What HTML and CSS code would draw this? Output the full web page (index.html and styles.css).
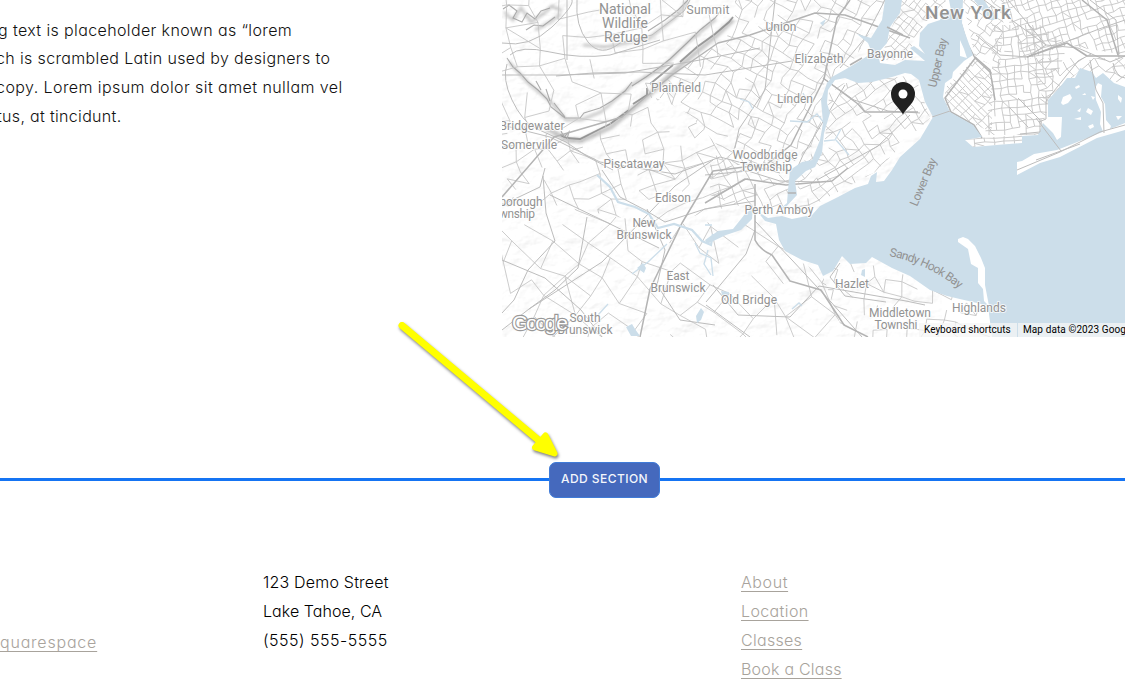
FILE: index.html
```html
<!DOCTYPE html>
<html lang="en">
<head>
<meta charset="utf-8">
<title>Location</title>
<link rel="stylesheet" href="styles.css">
</head>
<body>
<main class="page">
  <section class="intro">
    <div class="copy">
      <div class="l1">g text is placeholder known as “lorem</div>
      <div class="l2">ch is scrambled Latin used by designers to</div>
      <div class="l3">copy. Lorem ipsum dolor sit amet nullam vel</div>
      <div class="l4">tus, at tincidunt.</div>
    </div>
    <div class="map">
      <svg class="map-art" viewBox="502 0 623 337" width="623" height="337">
        <defs>
          <filter id="soft" x="-20%" y="-20%" width="140%" height="140%"><feGaussianBlur stdDeviation="1.5"/></filter>
          <filter id="relief" x="0" y="0" width="100%" height="100%">
            <feTurbulence type="fractalNoise" baseFrequency=".045 .07" numOctaves="4" seed="8"/>
            <feDiffuseLighting surfaceScale="3" lighting-color="#fff" diffuseConstant="1.45"><feDistantLight azimuth="225" elevation="45"/></feDiffuseLighting>
          </filter>
        </defs>
        <rect x="502" y="0" width="623" height="337" fill="#fff"/>
        <rect x="502" y="0" width="440" height="337" filter="url(#relief)" opacity=".17"/>
        <g class="shade" filter="url(#soft)">
          <path d="M509 62L529 84L551 102L566 120L581 120L601 112L633 84L661 69L688 42L716 19"/>
          <path class="deep" d="M546 128L568 140L581 141L611 127L648 96L681 65L716 36L733 20"/>
          <path d="M583 45L605 47L648 39L675 18L688 1"/>
          <path d="M504 12L513 20L521 8L531 22L543 14L552 6L562 11M535 30L550 22L561 14"/>
        </g>
        <g class="ridge">
          <path d="M507 58L513 67L520 73L528 82L538 90L547 99L551 107L565 118L580 118L584 113L600 108L612 101L625 91L632 82"/>
          <path d="M632 86L646 77L660 67L670 59L687 43L700 30L715 18L721 10"/>
          <path class="heavy" d="M560 135L567 138L580 139L596 131L610 124L629 110M633 104L647 95L647 88M650 84L673 65M680 62L697 47L715 34L729 22L733 17"/>
          <path d="M648 31L665 20L678 10L688 0M546 89L550 101M536 81L541 90M554 103L565 117M561 131l3 6 5-5-2 7"/>
          <path d="M503 9l6-4 8 6-4 7 9 4 5-9 8 6 6-8 9-3M526 30l8-5 9 1 12-9"/>
        </g>
        <g id="streets"></g>
        <g class="road">
          <path d="M502 43Q530 48 552 27T572 0M577 0Q575 26 588 42T620 43L652 35L684 11L690 0"/>
          <path d="M507 64Q502 79 512 100T535 128L566 142L588 157L613 170M502 75H560L625 73L700 60L760 48"/>
          <path d="M510 55Q520 45 550 52T610 55L660 40M556 76L593 73L640 72L705 75L792 61"/>
          <path d="M502 125L550 137L600 162L675 174L720 157L780 173"/>
          <path d="M502 205L540 187L545 168M543 176L546 213L555 241L528 270L514 300L502 313M587 217L578 268L555 290L529 309L502 330"/>
          <path d="M502 260L545 278L581 310L602 337M550 195L602 220L659 248M529 309L602 262L675 186L713 160"/>
          <path d="M567 0V60M602 170L620 197L645 210L665 222L705 209L755 201M647 209L665 250L657 285L680 320L715 325"/>
          <path d="M706 305L750 337M706 302L746 254L755 230M713 285L738 315L790 317L819 286L906 301L925 305"/>
          <path d="M755 221L792 260L831 302L862 337M840 263L830 277L845 296L886 302"/>
          <path d="M885 0L865 38L840 68M920 113L888 111L854 100L823 78M910 115L878 146L817 180"/>
          <path d="M792 180L803 155L845 85M735 148L739 129L765 90L775 0M705 175L748 171L780 181L820 182"/>
        </g>
        <g class="highway">
          <path d="M640 337L650 289L682 223L713 171L767 164L791 145L824 79L837 18L850 0"/>
          <path d="M755 184V240Q760 250 772 255L790 281L821 290L844 325L868 337"/>
          <path d="M502 197L554 137L622 117L672 75L718 43L750 35L815 13L845 15L910 38"/>
          <path d="M705 203L745 179L786 185L832 181L848 168M823 78L858 104L865 112L918 112"/>
          <path d="M954 0L967 43L975 58L991 73M976 57L945 98L951 112L974 125L982 138"/>
        </g>
        <g class="water">
          <path d="M757 211L768 218L782 216L792 219L812 215L820 206L838 197L855 188L868 184L871 176L877 172L876 182L884 181L892 170L900 157L920 139L933 117L925 102L919 80L911 74L905 73L892 77L872 82L858 83L845 78L835 80L828 90L827 103L830 113L824 133L822 153L815 167L806 171L795 181L797 195L785 208L779 210L787 203L788 190L790 170L802 162L812 160L820 140L823 123L821 100L827 83L832 77L848 68L858 62L872 53L868 43L857 34L871 38L882 20L885 0H902L900 13L890 27L887 43L878 53L880 63L895 65L905 60L925 61L910 48L914 46L925 54L919 46L920 33L928 24L940 20L944 12L951 10L949 0H963L962 23L965 33L973 55L964 61L953 72L952 78L945 83L943 97L950 112L973 125L982 137L965 140L973 147L1022 143L1022 136L1038 135L1043 123L1053 133L1057 140L1061 137L1062 117L1048 117L1048 100L1060 87L1067 78L1075 78L1080 68L1092 72L1096 78L1103 73L1114 83L1125 87V337H992L988 306L977 303L947 296L930 290L910 276L892 268L872 257L866 263L850 264L842 256L833 271L823 276L818 265L802 260L785 251L779 240L776 224L765 221Z"/>
          <path d="M974 0H984L997 20L989 20ZM705 240L718 231L733 229L745 214L753 208L752 219L741 230L726 235L707 244Z"/>
          <path d="M626 327l6-3 3 5 5 7h-9zM637 268l6-5 3 5-2 5zM721 291l8 1-1 5-6-2zM696 316l5-8 3 4-3 8-4 3zM862 270l3-1v8l-4-2zM820 23l6-4-3 7z"/>
        </g>
        <g class="stream">
          <path class="wide" d="M597 175L610 187L618 202L635 207L649 214L658 228L674 224L692 230L702 241L711 245L713 234"/>
          <path d="M695 243L700 253L711 258L713 276M667 244L648 262L632 274M608 304L598 315M705 225L712 225M790 121L807 122L817 114L825 124M824 141L835 140L841 129M836 140L843 148L849 155M803 93L807 101M740 99L749 102L753 109M708 250L704 264L711 275M792 309L799 303L802 306"/>
        </g>
        <g class="islands">
          <path d="M1017 162L1022 161L1034 154L1057 150L1090 137L1125 123V130L1097 138L1060 157L1040 163L1017 175Z"/>
          <path d="M958 239L963 237L968 239L975 246L981 258L985 268L985 285L989 306L984 301L983 289L978 283L978 268L971 264L968 249L958 242Z"/>
          <path d="M1061 103L1063 97L1070 94L1072 98L1068 103L1063 105ZM1075 87l4-2 1 2-4 2zM1074 119l7-2v3zM1095 88L1098 83L1102 85L1101 97L1105 104L1106 120L1111 126L1108 134L1104 134L1100 124L1101 112L1096 100ZM1088 126l5-2 1 3-4 2zM1116 116l6 0-4 4zM1077 111l4-3-1 4zM1088 108l5 3-2 4-5-3zM1091 96l4 1-2 3zM1082 95l3-2 1 2zM960 40L964 49L967 58L960 56ZM1118 95l4 3-1 5-3-4z"/>
        </g>
        <g class="road bridge">
          <path d="M932 117L950 111M1036 118L1061 151M1090 60L1096 90L1103 103L1104 133M1017 170L1060 152L1100 132L1125 125M1036 160L1080 144"/>
          <path d="M984 0L1046 45L1078 48L1110 62L1125 56M1008 0L1046 45L1028 57L1000 55L976 35M1027 57L1099 29L1125 20M1090 0L1116 20L1119 58"/>
          <path class="major" d="M1027 57L1067 43L1087 56H1125M1082 0L1107 20L1118 55M975 57L990 70L995 100M788 193H796M850 65L862 58M887 27L903 35"/>
          <path d="M1113 63Q1116 77 1125 78M1018 98L1040 120V132L1020 134M1009 107L1028 127M1039 122L1046 119L1046 101L1078 61L1091 54"/>
        </g>
        <g class="labels">
          <g class="town big"><text x="625" y="14" textLength="52">National</text><text x="625" y="28" textLength="46">Wildlife</text><text x="626" y="42" textLength="44">Refuge</text></g>
          <g class="town">
            <text x="708" y="14" textLength="43">Summit</text><text x="781" y="31" textLength="31">Union</text><text x="819" y="63" textLength="49">Elizabeth</text>
            <text x="890" y="58" textLength="46">Bayonne</text><text x="676" y="92" textLength="50">Plainfield</text><text x="795" y="103" textLength="36">Linden</text>
            <text x="532" y="130" textLength="65">Bridgewater</text><text x="529" y="149" textLength="56">Somerville</text><text x="634" y="168" textLength="61">Piscataway</text>
            <text x="765" y="159" textLength="65">Woodbridge</text><text x="766" y="171" textLength="52">Township</text><text x="673" y="202" textLength="36">Edison</text>
            <text x="779" y="214" textLength="69">Perth Amboy</text><text x="521" y="206" textLength="43">porough</text><text x="517" y="218" textLength="36">wnship</text>
            <text x="644" y="227" textLength="23">New</text><text x="644" y="239" textLength="55">Brunswick</text><text x="678" y="280" textLength="23">East</text><text x="678" y="292" textLength="55">Brunswick</text>
            <text x="749" y="304" textLength="56">Old Bridge</text><text x="852" y="288" textLength="34">Hazlet</text><text x="979" y="312" textLength="54">Highlands</text>
            <text x="900" y="317" textLength="62">Middletown</text><text x="896" y="329" textLength="43">Townshi</text>
            <text x="585" y="322" textLength="31">South</text><text x="585" y="334" textLength="55">Brunswick</text>
          </g>
          <text class="city" x="968" y="19" textLength="86">New York</text>
          <g class="bay"><text transform="translate(936 88) rotate(-77)" textLength="50">Upper Bay</text><text transform="translate(917 207) rotate(-67)" textLength="51">Lower Bay</text>
          <path id="hook" d="M889 256Q930 264 960 290" fill="none"/><text><textPath href="#hook" textLength="78">Sandy Hook Bay</textPath></text></g>
        </g>
        <text class="brand" x="512" y="330" textLength="56">Google</text>
        <path d="M903 114.500C899 107 891 103 891 94A12 12 0 0 1 915 94C915 103 907 107 903 114.500Z" fill="#212121"/><circle cx="903" cy="94" r="4.500" fill="#fff"/>
      </svg>
      <div class="legal"><span class="keys">Keyboard shortcuts</span><span class="data">Map data ©2023 Google</span></div>
    </div>
  </section>
  <section class="divider"><span class="rule"></span><button class="add" type="button">ADD SECTION</button><span class="rule"></span></section>
  <footer class="footer">
    <div class="made"><a class="f0">quarespace</a></div>
    <div class="address"><div class="f1">123 Demo Street</div><div class="f2">Lake Tahoe, CA</div><div class="f3">(555) 555-5555</div></div>
    <nav class="links"><a class="f4">About</a><a class="f5">Location</a><a class="f6">Classes</a><a class="f7">Book a Class</a></nav>
  </footer>
  <svg class="arrow" width="180" height="150" viewBox="390 315 180 150"><path d="M402 325.500L542 443" stroke="#ff0" stroke-width="7" stroke-linecap="round"/><path d="M545.500 435.500L554.500 453.500L535 447.500Z" fill="#ff0" stroke="#ff0" stroke-width="6" stroke-linejoin="round"/></svg>
</main>
<script src="streets.js"></script>
</body>
</html>
```
FILE: streets.js
```js
// Each district: outline, street angle in degrees, block width and height, jitter, share of streets kept.
const districts = [
  ["502,0 735,0 735,45 648,100 582,142 502,120", -12, 25, 21, 10, .52],
  ["735,0 885,0 866,40 847,70 823,85 820,140 790,165 735,165 690,115 650,92 735,30", 28, 11, 10, 5, .72],
  ["502,120 582,142 650,95 690,115 735,165 735,205 660,225 502,195", -22, 17, 15, 8, .62],
  ["502,195 660,225 755,220 790,255 823,276 845,337 502,337", 38, 29, 23, 12, .6],
  ["710,155 790,165 788,205 755,212 710,195", -25, 10, 9, 4, .72],
  ["830,85 915,75 930,118 875,172 795,215 800,165 825,140", -36, 10, 9, 4, .7],
  ["902,0 950,0 920,30 905,60 880,60", -50, 7, 6, 2, .75],
  ["823,276 842,256 905,275 980,305 990,337 845,337", 15, 16, 13, 7, .6],
  ["963,0 1005,0 1000,68 975,58", 35, 8, 6, 3, .78],
  ["1000,0 1125,0 1125,55 1065,45 1025,60", -18, 7, 7, 2.5, .82],
  ["992,25 1040,25 1067,45 1050,100 1040,135 985,135 992,80", -5, 7.5, 7, 2, .86],
  ["975,58 992,72 992,132 970,123 945,105 945,88", -45, 4.5, 9, 1, .85],
  ["1030,58 1125,58 1125,85 1080,70 1045,105", -38, 9, 8, 3, .78],
  ["965,139 1022,135 1022,143 973,147", -3, 10, 4, 1, .9]
];
let seed = 41;
const rnd = () => (seed = (seed * 16807) % 2147483647) / 2147483647;
let out = "";
districts.forEach(([outline, angle, w, h, jitter, keep], n) => {
  const pts = outline.split(" ").map(p => p.split(",").map(Number));
  const xs = pts.map(p => p[0]), ys = pts.map(p => p[1]);
  const cx = (Math.min(...xs) + Math.max(...xs)) / 2, cy = (Math.min(...ys) + Math.max(...ys)) / 2;
  const r = Math.hypot(Math.max(...xs) - cx, Math.max(...ys) - cy) + 10;
  const a = angle * Math.PI / 180, c = Math.cos(a), s = Math.sin(a);
  const nodes = [];
  for (let v = -r; v < r; v += h) {
    const row = [];
    for (let u = -r; u < r; u += w) {
      const x = u + (rnd() - .5) * jitter, y = v + (rnd() - .5) * jitter;
      row.push([(cx + x * c - y * s).toFixed(1), (cy + x * s + y * c).toFixed(1)]);
    }
    nodes.push(row);
  }
  let d = "";
  nodes.forEach((row, j) => row.forEach((p, i) => {
    if (row[i + 1] && rnd() < keep) d += `M${p}L${row[i + 1]}`;
    if (nodes[j + 1] && rnd() < keep) d += `M${p}L${nodes[j + 1][i]}`;
    if (nodes[j + 1] && row[i + 1] && rnd() < .08) d += `M${p}L${nodes[j + 1][i + 1]}`;
  }));
  out += `<clipPath id="d${n}"><polygon points="${outline}"/></clipPath><path clip-path="url(#d${n})" d="${d}"/>`;
});
document.getElementById("streets").innerHTML = out;
```
FILE: styles.css
```css
* { box-sizing: border-box; }
body { margin: 0; background: #fff; font-family: Inter, "Liberation Sans", sans-serif; }
.page { position: relative; width: 1125px; height: 697px; overflow: hidden; display: flex; flex-direction: column; }
.intro { display: flex; height: 337px; }
.copy { width: 502px; padding-top: 15.500px; font-size: 16px; font-weight: 300; line-height: 28.800px; color: #111; white-space: nowrap; font-feature-settings: "cv11"; }
.l1 { margin-left: -2px; letter-spacing: .38px; }
.l2 { margin-left: -4px; letter-spacing: .36px; }
.l3 { margin-left: -4px; letter-spacing: .43px; }
.l4 { margin-left: -3px; letter-spacing: .32px; }
.map { position: relative; width: 623px; height: 337px; overflow: hidden; font-family: Roboto, sans-serif; }
.map-art { display: block; }
.shade { fill: none; stroke: #777; stroke-width: 3; opacity: .4; }
.shade .deep { stroke-width: 5; opacity: 1; }
.ridge { fill: none; stroke: #9b9b9b; stroke-width: 1.100; opacity: .8; }
.ridge .heavy { stroke: #868686; stroke-width: 1.800; }
#streets { fill: none; stroke: #c6c6c6; stroke-width: .9; }
.road { fill: none; stroke: #bdbdbd; stroke-width: 1; stroke-linejoin: round; }
.road .major { stroke: #b2b2b2; stroke-width: 1.500; }
.highway { fill: none; stroke: #b4b4b4; stroke-width: 1.500; stroke-linejoin: round; }
.water { fill: #ccdeea; }
.stream { fill: none; stroke: #ccdeea; stroke-width: 1.300; }
.stream .wide { stroke-width: 2.200; }
.islands { fill: #fff; }
.labels text { fill: #929292; stroke: #fff; stroke-width: 2px; stroke-opacity: .75; stroke-linejoin: round; paint-order: stroke; font-size: 12px; text-anchor: middle; }
.labels .big text { font-size: 14px; }
.labels .city { font-size: 19px; font-weight: 500; }
.labels .bay text { text-anchor: start; stroke: none; }
.brand { font: 21px "Liberation Sans", sans-serif; fill: #fff; stroke: #999; stroke-width: 2.400px; paint-order: stroke; }
.legal { position: absolute; left: 417px; bottom: 0; display: flex; width: 206px; height: 14px; overflow: hidden; font-size: 10px; line-height: 14px; color: #000; white-space: nowrap; background: rgba(245, 245, 245, .75); }
.keys { flex: none; width: 99px; padding-left: 5px; border-right: 1px solid #ccdeea; }
.data { flex: none; padding-left: 5px; letter-spacing: .1px; }
.divider { display: flex; align-items: center; height: 36px; margin-top: 125px; }
.rule { height: 3px; margin-bottom: 2px; background: #1574f3; flex: 0 0 549px; }
.rule:last-child { flex: 1; }
.add { width: 111px; height: 36px; padding: 0 0 3px; border: 1px solid #3f7bd8; border-radius: 7px; background: #4569bd; color: #f4f6fb; font: 500 12px Inter, sans-serif; letter-spacing: .45px; white-space: nowrap; }
.footer { display: grid; grid-template-columns: 263px 478px 1fr; padding-top: 70px; font-size: 16px; font-weight: 300; line-height: 29px; color: #000; white-space: nowrap; font-feature-settings: "cv11"; }
.made { padding-top: 60px; }
.links { display: flex; flex-direction: column; align-items: flex-start; }
.made a, .links a { color: #a8a39c; text-decoration: underline; text-decoration-thickness: 1px; text-underline-offset: 3px; text-decoration-skip-ink: none; }
.f0 { letter-spacing: .8px; }
.f1 { letter-spacing: .2px; }
.f2 { letter-spacing: .05px; }
.f3 { letter-spacing: .5px; }
.f4 { letter-spacing: .6px; }
.f5 { letter-spacing: .38px; }
.f6 { letter-spacing: .3px; }
.f7 { letter-spacing: .22px; }
.arrow { position: absolute; left: 390px; top: 315px; fill: none; filter: drop-shadow(1px 2px 1.500px rgba(0, 0, 0, .5)); }
```
